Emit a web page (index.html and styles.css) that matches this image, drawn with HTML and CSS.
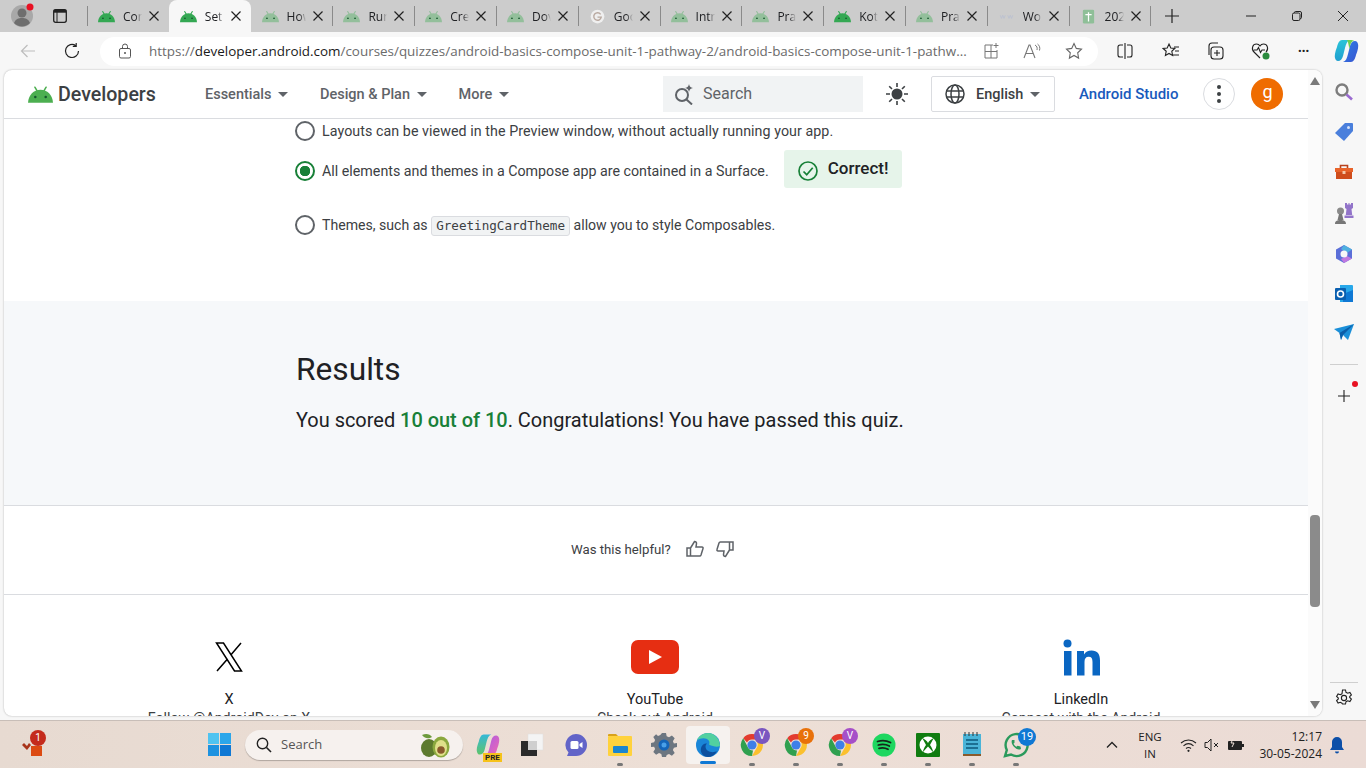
FILE: index.html
```html
<!DOCTYPE html>
<html lang="en">
<head>
    <meta charset="UTF-8">
    <meta name="viewport" content="width=device-width, initial-scale=1.0">
    <title>Android Basics with Compose quiz</title>
    <link rel="stylesheet" href="styles.css">
</head>
<body>
    <svg class="defs" width="0" height="0">
        <symbol id="droid" viewBox="0 0 24 16">
            <path d="M6.600 1 9 5M17.400 1 15 5" stroke="currentColor" stroke-width="1.500" stroke-linecap="round" fill="none"/>
            <path d="M0 16C.4 8.500 5.500 3.500 12 3.500S23.600 8.500 24 16z" fill="currentColor"/>
            <circle cx="7" cy="10.500" r="1.200" fill="#14562c"/>
            <circle cx="17" cy="10.500" r="1.200" fill="#14562c"/>
        </symbol>
        <symbol id="close" viewBox="0 0 12 12">
            <path d="M1.500 1.500 10.500 10.500M10.500 1.500 1.500 10.500" stroke="#222" stroke-width="1.200" fill="none"/>
        </symbol>
        <symbol id="caret" viewBox="0 0 10 5">
            <path d="M0 0h10L5 5z" fill="currentColor"/>
        </symbol>
        <symbol id="chrome" viewBox="0 0 24 24">
            <path d="M12 1a11 11 0 0 1 9.500 5.500H12a5.500 5.500 0 0 0-5 3L3.200 5.200A11 11 0 0 1 12 1z" fill="#e33b2e"/>
            <path d="M21.500 6.500A11 11 0 0 1 12 23l4.700-8.200A5.500 5.500 0 0 0 17 9z" fill="#fbc02d"/>
            <path d="M12 23A11 11 0 0 1 3.200 5.200L8 14.500a5.500 5.500 0 0 0 5 3z" fill="#2fa04f"/>
            <circle cx="12" cy="12" r="4.600" fill="#3f7fe8"/>
        </symbol>
        <linearGradient id="copilot-left" x1="0" y1="0" x2="0" y2="1">
            <stop offset="0" stop-color="#2bc4d8"/>
            <stop offset="1" stop-color="#1f9fd0"/>
        </linearGradient>
        <linearGradient id="copilot-right" x1="0" y1="0" x2="1" y2="1">
            <stop offset="0" stop-color="#2a7fe8"/>
            <stop offset="1" stop-color="#3a55d0"/>
        </linearGradient>
        <linearGradient id="pre-left" x1="0" y1="0" x2="0" y2="1">
            <stop offset="0" stop-color="#35b8d8"/>
            <stop offset="1" stop-color="#5fc46a"/>
        </linearGradient>
        <linearGradient id="pre-right" x1="0" y1="0" x2="1" y2="1">
            <stop offset="0" stop-color="#a85ae8"/>
            <stop offset="1" stop-color="#f06ab0"/>
        </linearGradient>
    </svg>

    <div class="tabstrip">
        <div class="profile">
            <svg width="24" height="26" viewBox="0 0 24 26"><circle cx="11" cy="13" r="11" fill="#a8a8a8"/><circle cx="11" cy="10" r="4.500" fill="#6e6e6e"/><path d="M3 20c1.500-4 4.500-5 8-5s6.500 1 8 5a11 11 0 0 1-16 0z" fill="#6e6e6e"/><circle cx="19" cy="4" r="3.500" fill="#e81123"/></svg>
        </div>
        <div class="workspaces">
            <svg width="16" height="16" viewBox="0 0 16 16"><rect x="1.700" y="1.700" width="12.600" height="12.600" rx="2" fill="none" stroke="#222" stroke-width="1.300"/><rect x="1.700" y="1.700" width="12.600" height="3" fill="#222"/><path d="M5 4v10" stroke="#222"/></svg>
        </div>
        <div class="tab sep"><svg class="favicon on"><use href="#droid"/></svg><span class="tab-title">Cor</span><svg class="tab-x"><use href="#close"/></svg></div>
        <div class="tab active"><svg class="favicon on"><use href="#droid"/></svg><span class="tab-title">Set</span><svg class="tab-x"><use href="#close"/></svg></div>
        <div class="tab"><svg class="favicon"><use href="#droid"/></svg><span class="tab-title">How</span><svg class="tab-x"><use href="#close"/></svg></div>
        <div class="tab sep"><svg class="favicon"><use href="#droid"/></svg><span class="tab-title">Run</span><svg class="tab-x"><use href="#close"/></svg></div>
        <div class="tab sep"><svg class="favicon"><use href="#droid"/></svg><span class="tab-title">Cre</span><svg class="tab-x"><use href="#close"/></svg></div>
        <div class="tab sep"><svg class="favicon"><use href="#droid"/></svg><span class="tab-title">Dov</span><svg class="tab-x"><use href="#close"/></svg></div>
        <div class="tab sep">
            <svg class="favicon" viewBox="0 0 24 24"><circle cx="12" cy="12" r="11" fill="#efefef"/><path d="M17 8.500A6 6 0 1 0 18 13h-6" fill="none" stroke="#b9a9a0" stroke-width="2.200"/></svg>
            <span class="tab-title">Goo</span><svg class="tab-x"><use href="#close"/></svg>
        </div>
        <div class="tab sep"><svg class="favicon"><use href="#droid"/></svg><span class="tab-title">Intr</span><svg class="tab-x"><use href="#close"/></svg></div>
        <div class="tab sep"><svg class="favicon"><use href="#droid"/></svg><span class="tab-title">Pra</span><svg class="tab-x"><use href="#close"/></svg></div>
        <div class="tab sep"><svg class="favicon on"><use href="#droid"/></svg><span class="tab-title">Kot</span><svg class="tab-x"><use href="#close"/></svg></div>
        <div class="tab sep"><svg class="favicon"><use href="#droid"/></svg><span class="tab-title">Pra</span><svg class="tab-x"><use href="#close"/></svg></div>
        <div class="tab sep">
            <svg class="favicon" viewBox="0 0 24 24"><path d="M2 10l2 5 2-5 2 5 2-5M14 10l2 5 2-5 2 5 2-5" fill="none" stroke="#b9bfd0" stroke-width="1.300"/></svg>
            <span class="tab-title">Wo</span><svg class="tab-x"><use href="#close"/></svg>
        </div>
        <div class="tab sep">
            <svg class="favicon" viewBox="0 0 24 24"><rect x="3" y="1" width="18" height="22" rx="2" fill="#8fbf98"/><path d="M12 5v15M7 9h10" stroke="#fff" stroke-width="2"/></svg>
            <span class="tab-title">202</span><svg class="tab-x"><use href="#close"/></svg>
        </div>
        <div class="new-tab sep">
            <svg width="16" height="16" viewBox="0 0 16 16"><path d="M8 1v14M1 8h14" stroke="#222" stroke-width="1.200"/></svg>
        </div>
        <div class="window-btns">
            <svg width="10" height="10" viewBox="0 0 10 10"><path d="M0 5h10" stroke="#222"/></svg>
            <svg width="10" height="10" viewBox="0 0 10 10"><rect x=".5" y="2" width="7.500" height="7.500" rx="1.500" fill="none" stroke="#222"/><path d="M2.500 2V1.500A1 1 0 0 1 3.500.5H8A1.500 1.500 0 0 1 9.500 2v4.500a1 1 0 0 1-1 1H8" fill="none" stroke="#222"/></svg>
            <svg width="10" height="10" viewBox="0 0 10 10"><path d="M0 0 10 10M10 0 0 10" stroke="#222"/></svg>
        </div>
    </div>

    <div class="toolbar">
        <svg class="back" width="16" height="16" viewBox="0 0 16 16"><path d="M15 8H1.500M7.500 2 1.500 8l6 6" fill="none" stroke="#bdbdbd" stroke-width="1.200"/></svg>
        <svg class="refresh" width="18" height="18" viewBox="0 0 18 18"><path d="M15.500 9A6.500 6.500 0 1 1 12.800 3.700M13.200 1v3.400H9.800" fill="none" stroke="#222" stroke-width="1.200"/></svg>
        <div class="address">
            <svg class="lock" width="14" height="16" viewBox="0 0 14 16"><rect x="1.500" y="5.500" width="11" height="9.500" rx="1.500" fill="none" stroke="#555"/><path d="M4.500 5.500V3.500a2.500 2.500 0 0 1 5 0v2" fill="none" stroke="#555"/><circle cx="7" cy="10" r="1" fill="#555"/></svg>
            <div class="url">https://<b>developer.android.com</b>/courses/quizzes/android-basics-compose-unit-1-pathway-2/android-basics-compose-unit-1-pathw...</div>
            <div class="address-icons">
                <svg width="17" height="17" viewBox="0 0 17 17"><path d="M10 2H2v13h12V7M2 8.500h12M8 2v13M13 0v5M10.500 2.500h5" fill="none" stroke="#777"/></svg>
                <svg width="19" height="17" viewBox="0 0 19 17"><path d="M1 15 6 2h1l5 13M3 10.500h7" fill="none" stroke="#777" stroke-width="1.100"/><path d="M12 2c2 1 2.500 3 2 5M14.500 1c2 1.500 2.800 3.500 2 6.500" fill="none" stroke="#777"/></svg>
                <svg width="18" height="18" viewBox="0 0 18 18"><path d="m9 1.500 2.300 4.900 5.200.7-3.800 3.700.9 5.300L9 13.500l-4.600 2.600.9-5.300L1.500 7.100l5.200-.7z" fill="none" stroke="#666" stroke-width="1.100"/></svg>
            </div>
        </div>
        <div class="tool-icons">
            <svg width="16" height="16" viewBox="0 0 16 16"><path d="M8 0v16M6 2H3a2 2 0 0 0-2 2v8a2 2 0 0 0 2 2h3M10 2h3a2 2 0 0 1 2 2v8a2 2 0 0 1-2 2h-3" fill="none" stroke="#222" stroke-width="1.100"/></svg>
            <svg class="tool-fav" width="18" height="18" viewBox="0 0 18 18"><path d="m7 2 1.800 4 4 .5-3 2.800.8 4.200L7 11.400l-3.600 2.100.8-4.200-3-2.800 4-.5zM12 5h5M13 9h4M11 13h6" fill="none" stroke="#222" stroke-width="1.100"/></svg>
            <svg width="18" height="18" viewBox="0 0 18 18"><rect x="5" y="5" width="12" height="12" rx="3" fill="none" stroke="#222" stroke-width="1.100"/><path d="M11 8v6M8 11h6M3 13V4a3 3 0 0 1 3-3h6" fill="none" stroke="#222" stroke-width="1.100"/></svg>
            <svg width="20" height="20" viewBox="0 0 20 20"><path d="M9 17 3 11C0 8 1.500 3 5.500 3 7 3 8.300 3.800 9 5c.7-1.200 2-2 3.500-2C16.500 3 18 8 15 11M3 9h3l1.500-2.500 2 5L11 9h3" fill="none" stroke="#222" stroke-width="1.100"/><circle cx="15" cy="15" r="3.500" fill="#2a8a3e"/></svg>
            <div class="dots">&#8226;&#8226;&#8226;</div>
            <svg class="copilot" width="25" height="24" viewBox="0 0 25 24"><path d="M8 1h8c-3 1-4 4-5 8l-2 8c-.8 3-2.500 5-5 5-1.500 0-2.500-1-3-3-.6-2 0-6 2-11C4 4 5.500 1 8 1z" fill="url(#copilot-left)"/><path d="M17 23H9c3-1 4-4 5-8l2-8c.8-3 2.500-5 5-5 1.500 0 2.500 1 3 3 .6 2 0 6-2 11-1 4-2.500 7-5 7z" fill="url(#copilot-right)"/><path d="M13 1h3c2 0 3.500 0 4 1-2 0-3.500 2-4 5l-.7 3c-.5-3-1-7-2.300-9z" fill="#6fcf50"/></svg>
        </div>
    </div>

    <div class="window-body">
        <div class="page">
            <div class="page-main">
                <header class="site-header">
                    <div class="logo">
                        <svg class="logo-droid"><use href="#droid"/></svg>
                        <span>Developers</span>
                    </div>
                    <nav class="site-nav">
                        <a class="nav-item">Essentials<svg class="caret"><use href="#caret"/></svg></a>
                        <a class="nav-item">Design &amp; Plan<svg class="caret"><use href="#caret"/></svg></a>
                        <a class="nav-item">More<svg class="caret"><use href="#caret"/></svg></a>
                    </nav>
                    <div class="search">
                        <svg width="22" height="22" viewBox="0 0 22 22"><circle cx="9" cy="12" r="6" fill="none" stroke="#5f6368" stroke-width="2"/><path d="m13.500 16.500 5.500 5" stroke="#5f6368" stroke-width="2"/><path d="M16 1c.4 2.500 1.500 3.600 4 4-2.500.4-3.600 1.500-4 4-.4-2.500-1.500-3.600-4-4 2.500-.4 3.600-1.500 4-4z" fill="#5f6368"/></svg>
                        <span>Search</span>
                    </div>
                    <svg class="sun" width="24" height="24" viewBox="0 0 24 24"><circle cx="12" cy="12" r="5.500" fill="#3c4043"/><path d="M12 1v4M12 19v4M1 12h4M19 12h4M4.200 4.200 7 7M17 17l2.800 2.800M19.800 4.200 17 7M7 17l-2.800 2.800" stroke="#3c4043" stroke-width="1.600"/></svg>
                    <div class="lang">
                        <svg width="20" height="20" viewBox="0 0 20 20"><g fill="none" stroke="#3c4043" stroke-width="1.500"><circle cx="10" cy="10" r="9"/><ellipse cx="10" cy="10" rx="4" ry="9"/><path d="M1.500 7h17M1.500 13h17"/></g></svg>
                        <span>English</span>
                        <svg class="caret"><use href="#caret"/></svg>
                    </div>
                    <a class="studio">Android Studio</a>
                    <div class="more-btn"><i></i><i></i><i></i></div>
                    <div class="avatar">g</div>
                </header>

                <div class="quiz-options">
                    <div class="option option-first"><span class="radio"></span><span>Layouts can be viewed in the Preview window, without actually running your app.</span></div>
                    <div class="option option-picked">
                        <span class="radio checked"></span>
                        <span>All elements and themes in a Compose app are contained in a Surface.</span>
                        <div class="correct">
                            <svg width="22" height="22" viewBox="0 0 22 22"><circle cx="11" cy="11" r="9" fill="none" stroke="#188038" stroke-width="1.700"/><path d="m6.500 11.500 3.200 3.200 6-7" fill="none" stroke="#188038" stroke-width="1.700"/></svg>
                            <span>Correct!</span>
                        </div>
                    </div>
                    <div class="option option-last"><span class="radio"></span><span class="option-text">Themes, such as <code>GreetingCardTheme</code> allow you to style Composables.</span></div>
                </div>

                <section class="results">
                    <h2>Results</h2>
                    <p>You scored <span class="score">10 out of 10</span>. Congratulations! You have passed this quiz.</p>
                </section>

                <div class="helpful">
                    <span>Was this helpful?</span>
                    <svg width="18" height="18" viewBox="0 0 18 18"><path d="M1 8h3.500v8H1zM4.500 8 8.500 1.500c1.500 0 2 1 2 2L10 7h6c.8 0 1.300.8 1 1.500l-2 6.500c-.2.600-.7 1-1.300 1H4.500" fill="none" stroke="#5f6368" stroke-width="1.500"/></svg>
                    <svg width="18" height="18" viewBox="0 0 18 18"><path d="M17 10h-3.500V2H17zM13.500 10l-4 6.500c-1.500 0-2-1-2-2L8 11H2c-.8 0-1.300-.8-1-1.500L3 3c.2-.6.7-1 1.300-1h9.200" fill="none" stroke="#5f6368" stroke-width="1.500"/></svg>
                </div>

                <div class="social">
                    <div class="social-item">
                        <div class="social-icon">
                            <svg width="28" height="30" viewBox="0 0 28 30"><g fill="none" stroke="#000" stroke-width="1.500"><path d="M1.500 1h7L26.500 29h-7z"/><path d="M26 1 16 12.800M2 29l10.500-12"/></g></svg>
                        </div>
                        <h3>X</h3>
                        <p>Follow @AndroidDev on X</p>
                    </div>
                    <div class="social-item">
                        <div class="social-icon">
                            <svg width="48" height="34" viewBox="0 0 48 34"><rect width="48" height="34" rx="7" fill="#e62e12"/><path d="M18 10v14l13-7z" fill="#fff"/></svg>
                        </div>
                        <h3>YouTube</h3>
                        <p>Check out Android</p>
                    </div>
                    <div class="social-item">
                        <div class="social-icon">
                            <svg width="37" height="37" viewBox="0 0 37 37"><g fill="#0a66c2"><circle cx="4.500" cy="4.500" r="4"/><rect x="1" y="12" width="7.500" height="24.500"/><path d="M14 12h7v3.500c1.500-2.500 4-4 7.500-4 6 0 8.500 3.500 8.500 10v15h-7.500V23c0-3.500-1-5.300-3.800-5.300-3 0-4.200 2-4.200 5.300v13.500H14z"/></g></svg>
                        </div>
                        <h3>LinkedIn</h3>
                        <p>Connect with the Android</p>
                    </div>
                </div>
            </div>

            <div class="scrollbar">
                <svg class="arrow" width="10" height="8" viewBox="0 0 10 8"><path d="M5 0l5 8H0z" fill="#7a7a7a"/></svg>
                <div class="thumb"></div>
                <svg class="arrow arrow-down" width="10" height="8" viewBox="0 0 10 8"><path d="M0 0h10L5 8z" fill="#7a7a7a"/></svg>
            </div>
        </div>

        <aside class="sidebar">
            <svg width="20" height="20" viewBox="0 0 20 20"><circle cx="8" cy="8" r="5.500" fill="none" stroke="#7d7d7d" stroke-width="2.400"/><path d="m12.500 12.500 5.500 5" stroke="#9a6ad0" stroke-width="2.600"/></svg>
            <svg width="20" height="20" viewBox="0 0 20 20"><path d="M11 1h7a1 1 0 0 1 1 1v7l-9 10-9-8z" fill="#4a7fdc"/><circle cx="14.500" cy="5.500" r="1.500" fill="#d5e2fa"/></svg>
            <svg width="20" height="20" viewBox="0 0 20 20"><path d="M6.500 6V3.500h7V6" fill="none" stroke="#b8421c" stroke-width="1.600"/><rect x="1" y="6" width="18" height="4" fill="#e8632a"/><rect x="2" y="10" width="16" height="7" fill="#cf4d1c"/><rect x="8.500" y="9" width="3" height="3" fill="#f4c8a8"/></svg>
            <svg width="20" height="22" viewBox="0 0 20 22"><circle cx="6.500" cy="9" r="3.500" fill="#8a8a8a"/><path d="M5 12h3l1.500 6h-6zM1 22c0-3 2-4 5.500-4S12 19 12 22z" fill="#777"/><path d="M11 1h2v1.500h1.500V1h1v1.500H17V1h2v5l-1.500 1 .7 6H11.800l.7-6L11 6zM10.500 13.500h9V16h-9z" fill="#9274c9"/></svg>
            <svg width="20" height="20" viewBox="0 0 20 20"><path d="M10 1 18 5.500v9L10 19 2 14.500v-9z" fill="#5b6fd8"/><path d="M10 1 18 5.500 13 9 7 5z" fill="#4fb0e0"/><path d="M18 14.500 10 19 7 15l6-3z" fill="#c079e0"/><circle cx="10" cy="10" r="3.500" fill="#f7f7f7"/></svg>
            <svg width="20" height="20" viewBox="0 0 20 20"><path d="M6 1h12a1 1 0 0 1 1 1v15a1 1 0 0 1-1 1H6z" fill="#28a8ea"/><path d="M9 10 19 6v12H9z" fill="#0f78d4"/><rect x="1" y="4" width="11" height="12" rx="1" fill="#0a5fb0"/><circle cx="6.500" cy="10" r="3" fill="none" stroke="#fff" stroke-width="1.600"/></svg>
            <svg width="20" height="18" viewBox="0 0 20 18"><path d="M0 5 20 0 14 16 9 11 7 16 5.500 9z" fill="#1a8fd8"/><path d="M5.500 9 20 0 9 11 7 16z" fill="#0b5da8"/></svg>
            <div class="side-line"></div>
            <div class="side-plus">
                <svg width="14" height="14" viewBox="0 0 14 14"><path d="M7 1v12M1 7h12" stroke="#222" stroke-width="1.100"/></svg>
                <i class="side-dot"></i>
            </div>
            <div class="side-foot">
                <div class="side-line"></div>
                <svg width="18" height="18" viewBox="0 0 18 18"><circle cx="9" cy="9" r="2.600" fill="none" stroke="#222" stroke-width="1.100"/><path d="M7.500 1h3l.5 2.300 1.700.9 2.200-.8 1.500 2.600-1.700 1.500v1l1.700 1.500-1.500 2.600-2.200-.8-1.700.9-.5 2.300h-3L7 14.200l-1.700-.9-2.200.8L1.600 11.500l1.700-1.500v-1L1.600 7.500l1.500-2.600 2.200.8L7 4.800z" fill="none" stroke="#222" stroke-width="1.100"/></svg>
            </div>
        </aside>
    </div>

    <footer class="taskbar">
        <div class="tray-left">
            <svg width="24" height="22" viewBox="0 0 24 22"><path d="M2 11l5 5 4-5-2-2-2 3-3-3z" fill="#a8341a"/><rect x="11" y="12" width="11" height="10" fill="#dc4a12"/></svg>
            <i class="badge badge-red">1</i>
        </div>
        <div class="start">
            <svg width="23" height="23" viewBox="0 0 23 23"><rect width="11" height="11" fill="#4fc3f0"/><rect x="12" width="11" height="11" fill="#2ba6ea"/><rect y="12" width="11" height="11" fill="#1d92e0"/><rect x="12" y="12" width="11" height="11" fill="#0f78d4"/></svg>
        </div>
        <div class="task-search">
            <svg width="16" height="16" viewBox="0 0 16 16"><circle cx="6.500" cy="6.500" r="5.200" fill="none" stroke="#222" stroke-width="1.400"/><path d="m10.500 10.500 4.500 4.500" stroke="#222" stroke-width="1.600"/></svg>
            <span>Search</span>
            <svg class="avocado" width="32" height="26" viewBox="0 0 32 26"><path d="M3 3c4-2 8-1 10 2-3 2-7 2-10-2z" fill="#6c9a3c"/><ellipse cx="10" cy="16" rx="8" ry="9" fill="#5d7a2e"/><ellipse cx="22" cy="15" rx="8.500" ry="10.500" fill="#8aa83e"/><ellipse cx="22" cy="16" rx="6" ry="8" fill="#dfe08a"/><circle cx="22" cy="18" r="3.800" fill="#8a5a2c"/></svg>
        </div>
        <div class="task-icons">
            <div class="task-icon">
                <svg width="24" height="24" viewBox="0 0 25 24"><path d="M8 1h8c-3 1-4 4-5 8l-2 8c-.8 3-2.500 5-5 5-1.500 0-2.500-1-3-3-.6-2 0-6 2-11C4 4 5.500 1 8 1z" fill="url(#pre-left)"/><path d="M17 23H9c3-1 4-4 5-8l2-8c.8-3 2.500-5 5-5 1.500 0 2.500 1 3 3 .6 2 0 6-2 11-1 4-2.500 7-5 7z" fill="url(#pre-right)"/></svg>
                <span class="pre">PRE</span>
            </div>
            <div class="task-icon"><svg width="24" height="24" viewBox="0 0 24 24"><rect x="8" y="1" width="15" height="16" fill="#f4f4f4" stroke="#ddd" stroke-width=".5"/><rect x="1" y="8" width="16" height="15" fill="#2a2a2a"/><path d="M8 8h9v9H8z" fill="#cfcfcf"/></svg></div>
            <div class="task-icon"><svg width="24" height="24" viewBox="0 0 24 24"><path d="M12 1a11 11 0 0 1 0 22H3l1.500-3.500A11 11 0 0 1 12 1z" fill="#6264c8"/><rect x="6.500" y="8" width="8" height="8" rx="1.500" fill="#fff"/><path d="m15.500 11 3-2v6l-3-2z" fill="#fff"/></svg></div>
            <div class="task-icon running"><svg width="26" height="24" viewBox="0 0 26 24"><path d="M1 2a1 1 0 0 1 1-1h7l2 2h-10z" fill="#d9a21b"/><rect x="1" y="3" width="24" height="20" rx="1" fill="#ffd23c"/><rect x="6" y="13" width="15" height="7" rx="1" fill="#1b86cf"/></svg></div>
            <div class="task-icon"><svg width="26" height="26" viewBox="0 0 26 26"><path d="M11 1h4l.7 3.300 2.300 1 2.900-1.800 2.800 2.800-1.800 2.900 1 2.300L26 11v4l-3.100.7-1 2.300 1.800 2.900-2.800 2.800-2.900-1.800-2.300 1L15 25h-4l-.7-3.100-2.300-1-2.900 1.800-2.800-2.800 1.800-2.900-1-2.300L0 15v-4l3.100-.7 1-2.300-1.800-2.900 2.800-2.800L7 4.100l2.300-1z" fill="#6d7680"/><circle cx="13" cy="13" r="5.500" fill="#1565b8"/><circle cx="13" cy="13" r="2.500" fill="#4aa0e8"/></svg></div>
            <div class="task-icon edge-active">
                <svg width="26" height="26" viewBox="0 0 26 26"><circle cx="13" cy="13" r="12" fill="#1a86d8"/><path d="M25 14C25 7 19.500 1 13 1 8 1 3.500 4 2 8.500 5 6 9 5.500 12 7c2.500 1.300 3 3.500 2 5.500 4 2 8 3 11 1.500z" fill="#52d0a0"/><path d="M13 25c-5 0-8-4.500-7-9 .6-3 3.500-5 6-4.500-2 1.500-2 5 .5 7 3 2.200 7 2 9.500.5C20 23 16.500 25 13 25z" fill="#0c4f9e"/></svg>
            </div>
            <div class="task-icon running"><svg width="24" height="24"><use href="#chrome"/></svg><i class="badge badge-purple">V</i></div>
            <div class="task-icon running"><svg width="24" height="24"><use href="#chrome"/></svg><i class="badge badge-orange">9</i></div>
            <div class="task-icon running"><svg width="24" height="24"><use href="#chrome"/></svg><i class="badge badge-violet">V</i></div>
            <div class="task-icon running"><svg width="24" height="24" viewBox="0 0 24 24"><circle cx="12" cy="12" r="11.500" fill="#1ed760"/><path d="M5.500 8.500c4.500-1.300 9-1 13 1M6.300 12c4-1 7.500-.8 11 1M7 15.300c3-.8 6.200-.6 9 1" fill="none" stroke="#14261a" stroke-width="1.800" stroke-linecap="round"/></svg></div>
            <div class="task-icon running"><svg width="24" height="24" viewBox="0 0 24 24"><rect width="24" height="24" rx="1" fill="#107c10"/><circle cx="12" cy="12" r="8.500" fill="#fff"/><path d="M6 5c3 1 5 3 6 5 1-2 3-4 6-5-2 3-3 5-4 7 2 3 3 5 3 7-2-2-3.500-4-5-5.500C10.500 15 9 17 7 19c0-2 1-4 3-7-1-2-2-4-4-7z" fill="#107c10"/></svg></div>
            <div class="task-icon running"><svg width="20" height="26" viewBox="0 0 20 26"><rect x="1" y="2" width="18" height="20" fill="#4ab4d8"/><path d="M3 0v4M7 0v4M11 0v4M15 0v4" stroke="#333" stroke-width="1"/><path d="M4 8h12M4 12h12M4 16h12" stroke="#1c6f92" stroke-width="2"/><rect x="1" y="22" width="18" height="2" fill="#8a5a2c"/></svg></div>
            <div class="task-icon running"><svg width="26" height="26" viewBox="0 0 26 26"><path d="M2 24l1.800-6A11 11 0 1 1 8 22.500z" fill="none" stroke="#2a9a5c" stroke-width="2.400"/><path d="M9 8c-1 2 0 5 2.500 7.300S16 18 18 17l-.5-2.500-3-.8-1 1c-1.200-.5-2.500-2-3-3l1-1L11.500 8z" fill="#2a9a5c"/></svg><i class="badge badge-blue">19</i></div>
        </div>
        <div class="tray">
            <svg class="chevron" width="12" height="8" viewBox="0 0 12 8"><path d="m1 6.500 5-5 5 5" fill="none" stroke="#222" stroke-width="1.300"/></svg>
            <div class="lang-tray"><div>ENG</div><div>IN</div></div>
            <svg class="tray-wifi" width="17" height="14" viewBox="0 0 17 14"><path d="M1 5c4.500-4 10.500-4 15 0M3.500 7.800c3-2.600 7-2.600 10 0M6 10.500c1.500-1.200 3.500-1.200 5 0" fill="none" stroke="#222" stroke-width="1.100"/><circle cx="8.500" cy="12.800" r="1.100" fill="#222"/></svg>
            <svg class="tray-sound" width="16" height="14" viewBox="0 0 16 14"><path d="M1 4.500h2.500L7 1v12L3.500 9.500H1zM10 5l4 4M14 5l-4 4" fill="none" stroke="#222"/></svg>
            <svg class="tray-batt" width="18" height="14" viewBox="0 0 18 14"><rect x="1" y="3" width="14" height="9" rx="1" fill="#222"/><rect x="15" y="6" width="2" height="3" fill="#222"/><path d="M6 1 4 5h3L5 9" fill="none" stroke="#f0e2da"/></svg>
            <div class="clock"><div>12:17</div><div>30-05-2024</div></div>
            <svg class="bell" width="16" height="18" viewBox="0 0 16 18"><path d="M8 1a5 5 0 0 1 5 5v5l2 3H1l2-3V6a5 5 0 0 1 5-5z" fill="#0c4fa8"/><path d="M6 15.500h4a2 2 0 0 1-4 0z" fill="#0c4fa8"/></svg>
        </div>
    </footer>
</body>
</html>
```

FILE: styles.css
```css
* {
    box-sizing: border-box;
}
html, body {
    margin: 0;
    height: 100%;
}
body {
    width: 1366px;
    height: 768px;
    overflow: hidden;
    display: flex;
    flex-direction: column;
    background-color: #f7f7f7;
    font-family: Roboto, Arial, sans-serif;
    color: #202124;
}
.defs {
    position: absolute;
}

/* browser tabs */
.tabstrip {
    height: 32px;
    flex: none;
    display: flex;
    align-items: center;
    background-color: #cccccc;
    color: #202124;
    font-family: "Open Sans", sans-serif;
    font-size: 12px;
}
.profile {
    width: 44px;
    padding-left: 11px;
    display: flex;
}
.workspaces {
    width: 43px;
    padding-left: 8px;
    display: flex;
}
.tab {
    width: 81.800px;
    height: 32px;
    flex: none;
    display: flex;
    align-items: center;
    padding-left: 11px;
    position: relative;
}
.sep::before {
    content: "";
    position: absolute;
    left: 0;
    top: 6px;
    height: 20px;
    border-left: 1px solid #8a8a8a;
}
.tab.active {
    background-color: #f7f7f7;
    border-radius: 8px 8px 0 0;
}
.favicon {
    width: 17px;
    height: 15px;
    flex: none;
    color: #93bf9b;
}
.favicon.on {
    color: #34a853;
}
.tab-title {
    width: 19px;
    margin-left: 8px;
    overflow: hidden;
    white-space: nowrap;
    -webkit-mask-image: linear-gradient(to right, #000 65%, transparent);
    mask-image: linear-gradient(to right, #000 65%, transparent);
}
.tab-x {
    width: 12px;
    height: 12px;
    margin-left: 6px;
}
.new-tab {
    width: 44px;
    height: 32px;
    position: relative;
    display: flex;
    align-items: center;
    padding-left: 14px;
}
.window-btns {
    margin-left: auto;
    display: flex;
    align-items: center;
    gap: 36px;
    padding-right: 18px;
}

/* toolbar */
.toolbar {
    height: 38px;
    flex: none;
    display: flex;
    align-items: center;
    padding-left: 20px;
}
.refresh {
    margin-left: 27px;
}
.address {
    width: 998px;
    height: 29px;
    margin-left: 19px;
    display: flex;
    align-items: center;
    background-color: #fff;
    border-radius: 15px;
    padding-left: 18px;
}
.url {
    margin-left: 17px;
    width: 826px;
    white-space: nowrap;
    overflow: hidden;
    font-family: "Open Sans", sans-serif;
    font-size: 13.430px;
    color: #6b6b6b;
}
.url b {
    font-weight: 400;
    color: #1a1a1a;
}
.address-icons {
    display: flex;
    align-items: center;
    gap: 23px;
    margin-left: 8px;
}
.tool-icons {
    display: flex;
    align-items: center;
    margin-left: 19px;
    gap: 27px;
}
.tool-fav {
    margin-left: 2px;
    margin-right: -1px;
}
.dots {
    font-size: 11px;
    letter-spacing: 0;
    width: 16px;
    color: #222;
}
.copilot {
    margin-left: -7px;
}

/* main window */
.window-body {
    height: 646px;
    flex: none;
    display: flex;
}
.page {
    width: 1318px;
    margin-left: 4px;
    flex: none;
    display: flex;
    background-color: #fff;
    border-radius: 8px;
    overflow: hidden;
    box-shadow: 0 0 2px rgba(0, 0, 0, .3);
}
.page-main {
    width: 1304px;
    flex: none;
    overflow: hidden;
}
.site-header {
    height: 49px;
    display: flex;
    align-items: center;
    border-bottom: 1px solid #dadce0;
    padding-left: 24px;
}
.logo {
    width: 177px;
    display: flex;
    align-items: center;
    font-size: 19.600px;
    font-weight: 500;
    color: #3c4043;
}
.logo-droid {
    width: 25px;
    height: 17px;
    margin-right: 5px;
    color: #4caf50;
}
.site-nav {
    width: 458px;
    display: flex;
    gap: 31.500px;
}
.nav-item {
    font-size: 14.500px;
    font-weight: 500;
    color: #5f6368;
    display: flex;
    align-items: center;
}
.caret {
    width: 10px;
    height: 5px;
    margin-left: 7px;
    color: #5f6368;
}
.search {
    width: 200px;
    height: 36px;
    display: flex;
    align-items: center;
    gap: 8px;
    padding-left: 10px;
    background-color: #f1f3f4;
    font-size: 16px;
    color: #5f6368;
}
.search span {
    margin-top: -1px;
}
.sun {
    margin-left: 22px;
}
.lang {
    width: 124px;
    height: 36px;
    margin-left: 22px;
    display: flex;
    align-items: center;
    padding-left: 13px;
    border: 1px solid #dadce0;
    border-radius: 2px;
    font-size: 14.500px;
    font-weight: 500;
    color: #3c4043;
}
.lang span {
    margin-left: 11px;
}
.lang .caret {
    margin-left: 7px;
}
.studio {
    margin-left: 24px;
    font-size: 15px;
    font-weight: 500;
    color: #185abc;
}
.more-btn {
    width: 32px;
    height: 32px;
    margin-left: 25px;
    border: 1px solid #dadce0;
    border-radius: 50%;
    display: flex;
    flex-direction: column;
    align-items: center;
    justify-content: center;
    gap: 3px;
}
.more-btn i {
    width: 4px;
    height: 4px;
    border-radius: 50%;
    background-color: #3c4043;
}
.avatar {
    width: 32px;
    height: 32px;
    margin-left: 16px;
    border-radius: 50%;
    background-color: #ef6c00;
    color: #fff;
    font-size: 18px;
    text-align: center;
    line-height: 27px;
}

/* quiz */
.quiz-options {
    height: 182px;
    padding-left: 291px;
    font-size: 14.250px;
    color: #3c4043;
}
.option {
    display: flex;
    align-items: center;
    gap: 7px;
    height: 24px;
    white-space: nowrap;
}
.option-first {
    letter-spacing: .06px;
}
.option-picked {
    height: 38px;
    margin-top: 7px;
}
.option-last {
    margin-top: 25px;
    font-size: 14.100px;
}
.option-text {
    padding-top: 1px;
}
.radio {
    width: 20px;
    height: 20px;
    flex: none;
    border: 2px solid #5f6368;
    border-radius: 50%;
    background-color: #fff;
}
.radio.checked {
    border-color: #188038;
    background: radial-gradient(circle, #188038 0 5px, #fff 5.500px);
    margin-top: 4px;
}
.option-picked > span:nth-child(2) {
    margin-top: 4px;
}
.correct {
    width: 118px;
    height: 38px;
    margin-left: 8px;
    display: flex;
    align-items: center;
    padding-left: 13px;
    gap: 9px;
    background-color: #e6f4ea;
    border-radius: 3px;
    font-size: 17px;
    font-weight: 500;
    color: #202124;
}
.correct svg {
    margin-top: 4px;
}
.correct span {
    margin-top: -3px;
}
code {
    display: inline-block;
    padding: 0 4px;
    line-height: 18px;
    background-color: #f1f3f4;
    border: 1px solid #dadce0;
    border-radius: 3px;
    font-family: "DejaVu Sans Mono", monospace;
    font-size: 12.600px;
    color: #3c4043;
}
.results {
    height: 205px;
    padding: 49px 0 0 292px;
    background-color: #f6f8fa;
    border-bottom: 1px solid #dadce0;
}
.results h2 {
    margin: 0;
    font-size: 31.700px;
    font-weight: 400;
    line-height: 40px;
    color: #202124;
}
.results p {
    margin: 17px 0 0;
    font-size: 19.950px;
    line-height: 26px;
    color: #202124;
}
.score {
    color: #188038;
    font-weight: 500;
}
.helpful {
    height: 89px;
    display: flex;
    align-items: center;
    padding: 0 0 2px 567px;
    border-bottom: 1px solid #dadce0;
    font-size: 13.200px;
    color: #3c4043;
}
.helpful svg {
    margin-left: 12px;
}
.helpful span {
    margin-right: 3px;
}
.social {
    display: grid;
    grid-template-columns: repeat(3, 426px);
    padding: 44px 0 0 12px;
    text-align: center;
}
.social-icon {
    height: 36px;
    display: flex;
    align-items: center;
    justify-content: center;
}
.social-item h3 {
    margin: 15px 0 0;
    font-size: 14.500px;
    font-weight: 400;
    line-height: 20px;
    color: #202124;
}
.social-item p {
    margin: -2px 0 0;
    white-space: nowrap;
    font-size: 14.200px;
    line-height: 20px;
    color: #3c4043;
}

/* page scrollbar */
.scrollbar {
    width: 14px;
    flex: none;
    display: flex;
    flex-direction: column;
    align-items: center;
    padding-top: 7px;
    background-color: #fbfbfb;
}
.thumb {
    width: 10px;
    height: 92px;
    margin-top: 430px;
    border-radius: 4px;
    background-color: #8b8b8b;
}
.arrow-down {
    margin-top: auto;
    margin-bottom: 7px;
}

/* edge sidebar */
.sidebar {
    width: 44px;
    flex: none;
    display: flex;
    flex-direction: column;
    align-items: center;
    padding-top: 12px;
    gap: 20px;
}
.side-line {
    width: 28px;
    border-top: 1px solid #cfcfcf;
    margin-top: 2px;
}
.side-plus {
    position: relative;
    margin-top: 4px;
    display: flex;
}
.side-dot {
    position: absolute;
    right: -7px;
    top: -8px;
    width: 6px;
    height: 6px;
    border-radius: 50%;
    background-color: #e81123;
}
.side-foot {
    margin-top: auto;
    display: flex;
    flex-direction: column;
    align-items: center;
    gap: 6px;
    padding-bottom: 9px;
}

/* taskbar */
.taskbar {
    height: 48px;
    margin-top: 4px;
    flex: none;
    display: flex;
    align-items: center;
    background: linear-gradient(to right, #e7dad1, #eddfd6 50%, #ebdbd5);
    border-top: 1px solid #c8beb8;
    font-family: "Open Sans", sans-serif;
    color: #222;
}
.tray-left {
    width: 198px;
    padding-left: 20px;
    position: relative;
    display: flex;
}
.start {
    width: 47px;
    padding-left: 10px;
    display: flex;
}
.task-search {
    width: 218px;
    height: 30px;
    display: flex;
    align-items: center;
    padding-left: 11px;
    background-color: #f6f1ee;
    border-radius: 15px;
    box-shadow: 0 1px 1px rgba(0, 0, 0, .25);
    font-size: 13px;
    color: #555;
}
.task-search span {
    margin: -2px 0 0 9px;
}
.avocado {
    margin-left: auto;
    margin-right: 12px;
}
.task-icons {
    display: flex;
    margin-left: 3px;
}
.task-icon {
    width: 44px;
    height: 38px;
    display: flex;
    align-items: center;
    justify-content: center;
    position: relative;
}
.task-icon.running::after {
    content: "";
    position: absolute;
    left: 19px;
    bottom: -2px;
    width: 6px;
    height: 3px;
    border-radius: 2px;
    background-color: #777;
}
.edge-active {
    background-color: #f6f2ef;
    border-radius: 4px;
}
.edge-active::after {
    content: "";
    position: absolute;
    left: 14px;
    bottom: 0;
    width: 16px;
    height: 3px;
    border-radius: 2px;
    background-color: #0f78d4;
}
.pre {
    position: absolute;
    left: 17px;
    bottom: 2px;
    padding: 0 2px;
    font-family: Roboto, sans-serif;
    font-size: 8px;
    font-weight: 700;
    line-height: 9px;
    background-color: #f6c21a;
    color: #222;
}
.badge {
    position: absolute;
    min-width: 16px;
    height: 16px;
    border-radius: 50%;
    font-family: Roboto, sans-serif;
    font-size: 10px;
    font-style: normal;
    line-height: 16px;
    text-align: center;
    color: #fff;
    left: 24px;
    top: 2px;
}
.badge-red {
    left: 30px;
    top: -4px;
    background-color: #c42b1c;
}
.badge-purple {
    background-color: #7a56c0;
}
.badge-orange {
    background-color: #e8710a;
}
.badge-violet {
    background-color: #a64fc8;
}
.badge-blue {
    background-color: #0f78d4;
    min-width: 18px;
    height: 18px;
    line-height: 18px;
    font-size: 11px;
}
.tray {
    display: flex;
    align-items: center;
    margin-left: 68px;
    font-size: 11.500px;
    line-height: 17px;
}
.lang-tray {
    width: 30px;
    margin-left: 17px;
    text-align: center;
}
.tray-wifi {
    margin-left: 15px;
}
.tray-sound {
    margin-left: 7px;
}
.tray-batt {
    margin-left: 7px;
}
.clock {
    width: 72px;
    margin-left: 5px;
    font-size: 12px;
    text-align: right;
}
.bell {
    margin-left: 7px;
}
```
